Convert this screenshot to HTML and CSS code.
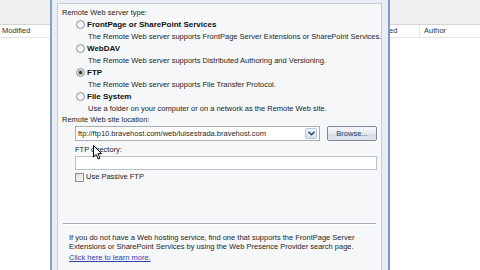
FILE: index.html
```html
<!DOCTYPE html>
<html>
<head>
<meta charset="utf-8">
<link rel="stylesheet" href="styles.css">
</head>
<body>
<div class="screen">
  <div class="pane pane-left">
    <div class="pane-top"></div>
    <div class="col-head"><span class="col col-mod">Modified</span></div>
  </div>
  <div class="dialog">
    <div class="panel">
      <div class="title">Remote Web server type:</div>
      <div class="option">
        <div class="opt-row"><span class="radio"></span><b>FrontPage or SharePoint Services</b></div>
        <div class="opt-desc">The Remote Web server supports FrontPage Server Extensions or SharePoint Services.</div>
      </div>
      <div class="option">
        <div class="opt-row"><span class="radio"></span><b>WebDAV</b></div>
        <div class="opt-desc">The Remote Web server supports Distributed Authoring and Versioning.</div>
      </div>
      <div class="option">
        <div class="opt-row"><span class="radio checked"></span><b>FTP</b></div>
        <div class="opt-desc">The Remote Web server supports File Transfer Protocol.</div>
      </div>
      <div class="option">
        <div class="opt-row"><span class="radio"></span><b>File System</b></div>
        <div class="opt-desc">Use a folder on your computer or on a network as the Remote Web site.</div>
      </div>
      <div class="label">Remote Web site location:</div>
      <div class="loc-row">
        <div class="combo">
          <span class="combo-text">ftp://ftp10.bravehost.com/web/luisestrada.bravehost.com</span>
          <span class="combo-btn"><svg width="7" height="5" viewBox="0 0 7 5"><path d="M0.5 0.8 L3.5 3.8 L6.5 0.8" fill="none" stroke="#2b3f63" stroke-width="1.4"/></svg></span>
        </div>
        <div class="btn">Browse...</div>
      </div>
      <div class="label sub">FTP directory:</div>
      <div class="input"></div>
      <div class="check-row"><span class="check"></span>Use Passive FTP</div>
      <div class="sep"></div>
      <div class="info">If you do not have a Web hosting service, find one that supports the FrontPage Server<br>Extensions or SharePoint Services by using the Web Presence Provider search page.</div>
      <div class="link">Click here to learn more.</div>
    </div>
    <svg class="cursor" width="10" height="15" viewBox="0 0 10 15"><path d="M0.5 0.5 L0.5 12 L3.2 9.4 L5.2 14 L7 13.2 L5 8.7 L8.6 8.7 Z" fill="#fff" stroke="#000" stroke-width="1" stroke-linejoin="round"/></svg>
  </div>
  <div class="pane pane-right">
    <div class="pane-top"></div>
    <div class="col-head"><span class="col col-ed">Modified</span><span class="col col-author">Author</span></div>
  </div>
</div>
</body>
</html>
```
FILE: styles.css
```css
* { box-sizing: border-box; }
html, body { margin: 0; padding: 0; }
body {
  width: 480px;
  height: 270px;
  overflow: hidden;
  background: #fff;
  font-family: "Liberation Sans", Arial, sans-serif;
  font-size: 7.5px;
  color: #1e1e1e;
}
.screen {
  display: flex;
  width: 480px;
  height: 270px;
}
.pane {
  background: #fff;
  overflow: hidden;
}
.pane-left { width: 50px; }
.pane-right { flex: 1; }
.pane-top {
  height: 25px;
  background: #f0f0f0;
  border-bottom: 1px solid #d4d4d4;
}
.col-head {
  display: flex;
  height: 13px;
  border-bottom: 1px solid #e4e4e4;
  line-height: 12px;
  white-space: nowrap;
}
.col { color: #333; }
.col-mod { padding-left: 2px; }
.col-ed { width: 51px; margin-left: -21px; border-right: 1px solid #e6e6e6; }
.col-author { padding-left: 4px; }

.dialog {
  position: relative;
  width: 340px;
  height: 270px;
  background: #e9eef5;
  border-left: 2px solid #8c9fc2;
  border-right: 2px solid #8099c4;
  padding: 3px 6px 0 5px;
  overflow: hidden;
}
.panel {
  height: 280px;
  background: #f6f7f9;
  border: 1px solid #c7cbd2;
  padding-top: 3px;
}
.title {
  padding-left: 4px;
  line-height: 11px;
  height: 11px;
}
.option { height: 24px; }
.opt-row {
  display: flex;
  align-items: center;
  height: 12px;
  padding-left: 18px;
  gap: 2px;
}
.opt-row b { font-weight: bold; font-size: 8px; color: #111; }
.radio {
  width: 9px;
  height: 9px;
  border-radius: 50%;
  border: 1px solid #8f9193;
  background: radial-gradient(circle at 50% 60%, #ffffff 0, #ececec 70%, #dcdcdc 100%);
  display: flex;
  align-items: center;
  justify-content: center;
}
.radio.checked::after {
  content: "";
  width: 3px;
  height: 3px;
  border-radius: 50%;
  background: #2c3a2c;
  box-shadow: 0 0 0 1px #8da08d;
}
.opt-desc {
  padding-left: 30px;
  padding-top: 1px;
  line-height: 11px;
  white-space: nowrap;
}
.label {
  padding-left: 4px;
  line-height: 12px;
  height: 12px;
}
.label.sub {
  padding-left: 17px;
  margin-top: 3px;
}
.loc-row {
  display: flex;
  gap: 7px;
  padding-left: 17px;
  height: 15px;
}
.combo {
  width: 245px;
  height: 15px;
  background: #fff;
  border: 1px solid #a7aeb8;
  display: flex;
  align-items: center;
  justify-content: space-between;
  padding: 0 2px 0 2px;
}
.combo-text { white-space: nowrap; line-height: 12px; }
.combo-btn {
  width: 12px;
  height: 11px;
  background: linear-gradient(#eef4fb, #d3e1f1);
  border: 1px solid #b5c6dc;
  border-radius: 2px;
  display: flex;
  align-items: center;
  justify-content: center;
}
.btn {
  width: 50px;
  height: 15px;
  border: 1px solid #7d8796;
  border-radius: 2px;
  background: linear-gradient(#f6f8fa 0, #e6eaef 50%, #d3dbe5 51%, #dfe6ee 100%);
  display: flex;
  align-items: center;
  justify-content: center;
  color: #243a5e;
}
.input {
  margin-left: 17px;
  width: 302px;
  height: 14px;
  background: #fff;
  border: 1px solid #bcc1c8;
}
.check-row {
  display: flex;
  align-items: center;
  gap: 2px;
  margin-top: 2px;
  height: 10px;
  padding-left: 17px;
  line-height: 10px;
}
.check {
  width: 9px;
  height: 9px;
  border: 1px solid #8f9193;
  background: linear-gradient(135deg, #dcdcdc, #fafafa);
}
.sep {
  margin: 41px 5px 0 5px;
  height: 2px;
  border-top: 1px solid #a9adb3;
  border-bottom: 1px solid #ffffff;
}
.info {
  margin-top: 8px;
  padding-left: 11px;
  line-height: 9px;
  white-space: nowrap;
}
.link {
  margin-top: 2px;
  padding-left: 11px;
  line-height: 10px;
  color: #3040b0;
  text-decoration: underline;
}
.cursor {
  position: absolute;
  left: 41px;
  top: 145px;
}
```
